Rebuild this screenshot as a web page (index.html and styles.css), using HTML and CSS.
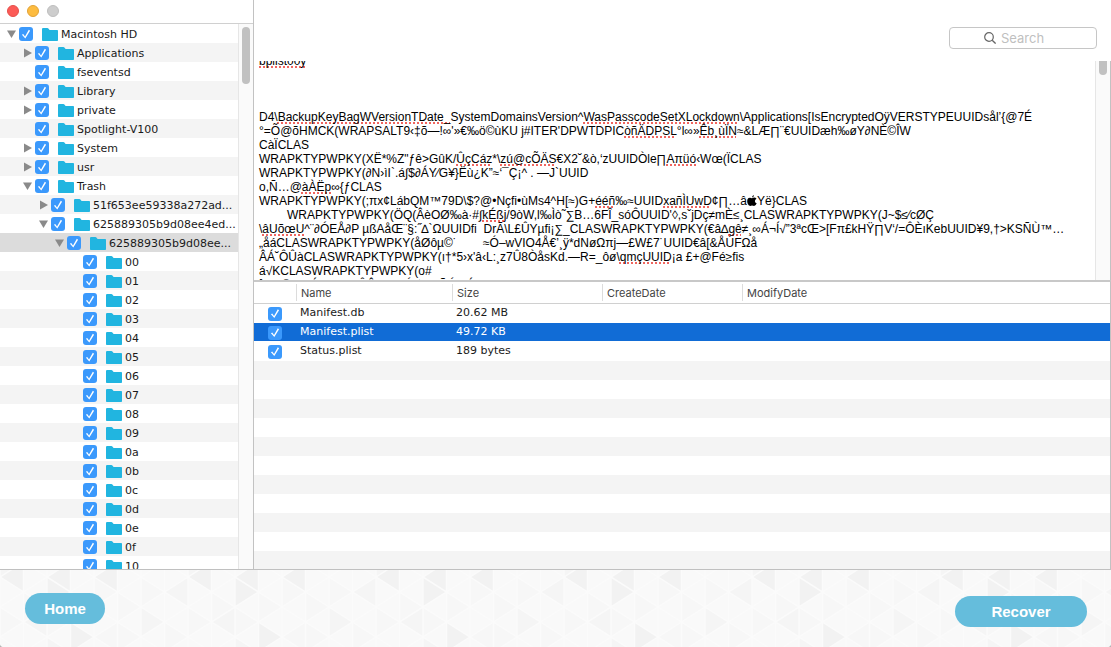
FILE: index.html
```html
<!DOCTYPE html>
<html lang="en">
<head>
<meta charset="utf-8">
<title>Recover files</title>
<link rel="stylesheet" href="styles.css">
</head>
<body>
<svg class="defs" aria-hidden="true">
  <symbol id="folder" viewBox="0 0 16 13"><path d="M0 1.2Q0 0 1 0H5.4Q6 0 6.4.5L7.600 2H15.200Q16 2 16 2.800V12.200Q16 13 15.200 13H.8Q0 13 0 12.200Z" fill="#21b5e0"/></symbol>
  <symbol id="down" viewBox="0 0 10 10"><path d="M0 1.500H9L4.500 9Z" fill="#8a8a8a"/></symbol>
  <symbol id="right" viewBox="0 0 10 10"><path d="M1 .5V9.500L9 5Z" fill="#8a8a8a"/></symbol>
</svg>
<div class="window">
  <main class="panes">
    <aside class="sidebar">
      <header class="titlebar">
        <button class="light close" aria-label="Close"></button>
        <button class="light minimize" aria-label="Minimize"></button>
        <button class="light zoom" aria-label="Zoom"></button>
      </header>
      <div class="tree-area">
        <ul class="tree">
          <li class="d0"><button class="arrow" aria-label="Collapse"><svg><use href="#down"/></svg></button><label><input type="checkbox" checked><svg class="folder"><use href="#folder"/></svg>Macintosh HD</label></li>
          <li class="d1"><button class="arrow" aria-label="Expand"><svg><use href="#right"/></svg></button><label><input type="checkbox" checked><svg class="folder"><use href="#folder"/></svg>Applications</label></li>
          <li class="d1 leaf"><label><input type="checkbox" checked><svg class="folder"><use href="#folder"/></svg>fseventsd</label></li>
          <li class="d1"><button class="arrow" aria-label="Expand"><svg><use href="#right"/></svg></button><label><input type="checkbox" checked><svg class="folder"><use href="#folder"/></svg>Library</label></li>
          <li class="d1"><button class="arrow" aria-label="Expand"><svg><use href="#right"/></svg></button><label><input type="checkbox" checked><svg class="folder"><use href="#folder"/></svg>private</label></li>
          <li class="d1 leaf"><label><input type="checkbox" checked><svg class="folder"><use href="#folder"/></svg>Spotlight-V100</label></li>
          <li class="d1"><button class="arrow" aria-label="Expand"><svg><use href="#right"/></svg></button><label><input type="checkbox" checked><svg class="folder"><use href="#folder"/></svg>System</label></li>
          <li class="d1"><button class="arrow" aria-label="Expand"><svg><use href="#right"/></svg></button><label><input type="checkbox" checked><svg class="folder"><use href="#folder"/></svg>usr</label></li>
          <li class="d1"><button class="arrow" aria-label="Collapse"><svg><use href="#down"/></svg></button><label><input type="checkbox" checked><svg class="folder"><use href="#folder"/></svg>Trash</label></li>
          <li class="d2"><button class="arrow" aria-label="Expand"><svg><use href="#right"/></svg></button><label><input type="checkbox" checked><svg class="folder"><use href="#folder"/></svg>51f653ee59338a272ad...</label></li>
          <li class="d2"><button class="arrow" aria-label="Collapse"><svg><use href="#down"/></svg></button><label><input type="checkbox" checked><svg class="folder"><use href="#folder"/></svg>625889305b9d08ee4ed...</label></li>
          <li class="d3 selected"><button class="arrow" aria-label="Collapse"><svg><use href="#down"/></svg></button><label><input type="checkbox" checked><svg class="folder"><use href="#folder"/></svg>625889305b9d08ee...</label></li>
          <li class="d4 leaf"><label><input type="checkbox" checked><svg class="folder"><use href="#folder"/></svg>00</label></li>
          <li class="d4 leaf"><label><input type="checkbox" checked><svg class="folder"><use href="#folder"/></svg>01</label></li>
          <li class="d4 leaf"><label><input type="checkbox" checked><svg class="folder"><use href="#folder"/></svg>02</label></li>
          <li class="d4 leaf"><label><input type="checkbox" checked><svg class="folder"><use href="#folder"/></svg>03</label></li>
          <li class="d4 leaf"><label><input type="checkbox" checked><svg class="folder"><use href="#folder"/></svg>04</label></li>
          <li class="d4 leaf"><label><input type="checkbox" checked><svg class="folder"><use href="#folder"/></svg>05</label></li>
          <li class="d4 leaf"><label><input type="checkbox" checked><svg class="folder"><use href="#folder"/></svg>06</label></li>
          <li class="d4 leaf"><label><input type="checkbox" checked><svg class="folder"><use href="#folder"/></svg>07</label></li>
          <li class="d4 leaf"><label><input type="checkbox" checked><svg class="folder"><use href="#folder"/></svg>08</label></li>
          <li class="d4 leaf"><label><input type="checkbox" checked><svg class="folder"><use href="#folder"/></svg>09</label></li>
          <li class="d4 leaf"><label><input type="checkbox" checked><svg class="folder"><use href="#folder"/></svg>0a</label></li>
          <li class="d4 leaf"><label><input type="checkbox" checked><svg class="folder"><use href="#folder"/></svg>0b</label></li>
          <li class="d4 leaf"><label><input type="checkbox" checked><svg class="folder"><use href="#folder"/></svg>0c</label></li>
          <li class="d4 leaf"><label><input type="checkbox" checked><svg class="folder"><use href="#folder"/></svg>0d</label></li>
          <li class="d4 leaf"><label><input type="checkbox" checked><svg class="folder"><use href="#folder"/></svg>0e</label></li>
          <li class="d4 leaf"><label><input type="checkbox" checked><svg class="folder"><use href="#folder"/></svg>0f</label></li>
          <li class="d4 leaf"><label><input type="checkbox" checked><svg class="folder"><use href="#folder"/></svg>10</label></li>
        </ul>
        <div class="track"><div class="thumb tree-thumb"></div></div>
      </div>
    </aside>
    <section class="content">
      <div class="toolbar">
        <label class="search">
          <svg viewBox="0 0 12 12"><circle cx="5" cy="5" r="4.300" fill="none" stroke="#666" stroke-width="1.200"/><path d="M8.200 8.200L11.600 11.600" stroke="#666" stroke-width="1.300"/></svg>
          <input type="search" placeholder="Search" aria-label="Search">
        </label>
      </div>
      <div class="preview">
        <div class="document"><p><u>bplist00ÿ</u></p>
<p></p><p></p><p></p>
<p>D4\<u>BackupKeyBagWVersionTDate_</u>SystemDomainsVersion^<u>WasPasscodeSetXLockdown</u>\Applications[IsEncryptedOÿVERSTYPEUUIDsål’{@7É</p>
<p>°=Õ@õHMCK(WRAPSALT9‹‡õ—!∞'»€‰ö©ùKU j#ITER'DPWTDPIC<u>òñÄDPSL</u>°l∞»<u>Êb¸ùÏN</u>≈&amp;LÆ∏¨€UUIDæh‰øY∂NÈ©ÎW</p>
<p>CàÏCLAS</p>
<p>WRAPKTYPWPKY(XË*%Z"ƒê&gt;GûK/<u>ÛçCáz</u>*\<u>zú@cÕÄS</u>€X2˘&amp;ò,‘zUUIDÒle∏<u>Aπüó</u>‹Wœ(ÏCLAS</p>
<p>WRAPKTYPWPKY(∂N›ìI`.á∫$∂ÁY⁄G¥}Ëù¿K”≈‘¯Ç¡^ . —J`UUID</p>
<p>o,Ñ…@<u>àÀËp</u>∞{ƒCLAS</p>
<p>WRAPKTYPWPKY(;πx¢LábQM™79D\$?@•Nçﬁ•ùMs4^H[≈)G+<u>ééñ</u>‰≈UUID<u>xañÌUwD</u>¢∏…â<svg class="apple" viewBox="0 0 10 11"><path d="M7 0Q5 .5 5 2.500 7 2.200 7 0ZM5 3.200Q6 2.600 7.200 2.600 8.700 2.700 9.500 3.800 7.600 5 8 6.700 8.300 7.900 9.700 8.200 8.700 10.900 7.100 11 6 10.500 5 10.500 4 10.500 3.200 11 1.500 10.800.5 8.200-.5 4.500 1.500 3.100 3 2.200 5 3.200Z"/></svg>Yë}CLAS</p>
<p>	WRAPKTYPWPKY(ÖQ(ÂèOØ‰à·#∫<u>kÉßj</u>/9òW,l‰Ìò˜∑B…6FÎ_sóÔUUID'◊,sˇjDç≠mÈ≤¸CLASWRAPKTYPWPKY(J~$≤⁄cØÇ</p>
<p>\<u>âUõœU</u>^¨∂ÓEÅ∂P µßAåŒ¨§:˝∆`ΩUUIDﬁ  DrÃ\L£ÛYµﬁ¡∑_CLASWRAPKTYPWPKY(€â∆<u>gê</u>≠¸∞Á¬Í√”3ªcŒ&gt;[Fπ£kHŸ∏V‘/=ÔÈıKebUUID¥9,†&gt;KSÑÙ™…</p>
<p>„åáCLASWRAPKTYPWPKY(åØôµ©˙	≈Ó–wVIO4Å€’¸ÿ*dNøΩπj—£W£7˙UUID€â[&amp;ÅÚFΩå</p>
<p>ÂÁ˘ÔÛàCLASWRAPKTYPWPKY(ı†*5›x'â‹L:¸z7Û8ÒåsKd.—R=_ôø\<u>qmçUUID</u>¡a £+@Fé≥ﬁs</p>
<p>á√KCLASWRAPKTYPWPKY(o#</p>
<p>ˆxpc©qnoÉwa(m)zÔÂasv·eÚ√wcrÑÓmÉ</p></div>
        <div class="track"><div class="thumb text-thumb"></div></div>
      </div>
      <div class="files">
        <table>
          <colgroup><col class="c-check"><col class="c-name"><col class="c-size"><col class="c-date"><col></colgroup>
          <thead><tr><th></th><th>Name</th><th>Size</th><th>CreateDate</th><th>ModifyDate</th></tr></thead>
          <tbody>
            <tr><td><input type="checkbox" id="f1" checked></td><td><label for="f1">Manifest.db</label></td><td>20.62 MB</td><td></td><td></td></tr>
            <tr class="selected"><td><input type="checkbox" id="f2" checked></td><td><label for="f2">Manifest.plist</label></td><td>49.72 KB</td><td></td><td></td></tr>
            <tr><td><input type="checkbox" id="f3" checked></td><td><label for="f3">Status.plist</label></td><td>189 bytes</td><td></td><td></td></tr>
          </tbody>
        </table>
        <div class="stripes"></div>
      </div>
    </section>
  </main>
  <footer class="footer">
    <svg class="pattern" aria-hidden="true">
      <defs>
        <pattern id="tri" width="188" height="90" patternUnits="userSpaceOnUse" patternTransform="translate(47 0)">
          <rect width="188" height="90" fill="#f9f9f9"/>
          <path d="M0 37V67L23.500 52ZM47 7V37L70.500 22ZM94 7V37L117.500 22ZM70.500 22V52L94 37ZM23.500 22V52L47 37ZM141 37V67L164.500 52ZM164.500 22V52L188 37ZM47 67L70.500 52V82ZM117.500 52V82L141 67ZM70.500 52V82L94 67Z" fill="#f7f7f7"/>
          <path d="M117.500 22L141 7V37ZM0 67V97L23.500 82ZM94 37V67L117.500 52ZM164.500 52L188 37V67ZM141 -8V7L164.500 7Z" fill="#f5f5f5"/>
          <path d="M0 7V37L23.500 22ZM0 7L23.500 -8V22ZM47 7L70.500 -8V22ZM141 7L164.500 -8V22ZM23.500 52V82L47 67Z" fill="#f2f2f2"/>
          <path d="M0 0V90M23.500 0V90M47 0V90M70.500 0V90M94 0V90M117.500 0V90M141 0V90M164.500 0V90M188 0V90M0 7L188 127.000M0 37L141 127M0 67L94 127M0 -23L188 97M0 -53L188 67M0 -83L188 37M0 -113L188 7M0 7L23.500 -8M0 37L70.500 -8M0 67L117.500 -8M0 97L164.500 -8M0 127L188 7M0 157L188 37M0 187L188 67M0 217L188 97" fill="none" stroke="#fbfbfb" stroke-width="1.500"/>
        </pattern>
      </defs>
      <rect width="100%" height="100%" fill="url(#tri)"/>
    </svg>
    <button class="action home">Home</button>
    <button class="action recover">Recover</button>
  </footer>
</div>
</body>
</html>
```
FILE: styles.css
```css
* { box-sizing: border-box; }

body {
  margin: 0;
  background: #b4b4b4;
  color: #1a1a1a;
  font: 11px/19px "DejaVu Sans", sans-serif;
}

button { padding: 0; border: 0; background: none; }

.defs { position: absolute; width: 0; height: 0; }

.window {
  display: flex;
  flex-direction: column;
  height: 100vh;
}

.panes {
  display: flex;
  flex: 1;
  min-height: 0;
  background: #fff;
}

.sidebar {
  display: flex;
  flex-direction: column;
  flex: none;
  width: 254px;
  border-right: 1px solid #c2c2c2;
}

.titlebar {
  display: flex;
  gap: 8px;
  height: 24px;
  padding: 5px 7px;
  border-bottom: 1px solid #d0d0d0;
}

.light { width: 12px; height: 12px; border-radius: 50%; }
.close { background: #fc5b57; border: 1px solid #e5504b; }
.minimize { background: #fdbc40; border: 1px solid #e2a336; }
.zoom { background: #cdcdcd; border: 1px solid #bebebe; }

.tree-area { display: flex; flex: 1; min-height: 0; }

.tree {
  flex: 1;
  min-width: 0;
  margin: 0;
  padding: 0;
  overflow: hidden;
  list-style: none;
}

.tree li {
  display: flex;
  align-items: center;
  gap: 2px;
  height: 19px;
  padding-left: 7px;
  white-space: nowrap;
}

.tree li:nth-child(even) { background: #f4f4f4; }
.tree li.selected { background: #dcdcdc; }
.tree .d1 { padding-left: 23px; }
.tree .d2 { padding-left: 39px; }
.tree .d3 { padding-left: 55px; }
.tree .d4 { padding-left: 71px; }
.leaf::before { content: ""; width: 10px; }

.arrow, .arrow svg { display: block; width: 10px; height: 10px; }
.tree label { display: flex; align-items: center; padding-top: 3px; line-height: 18px; }

.folder { width: 16px; height: 13px; margin: 0 3px 1px 9px; }

input[type="checkbox"] {
  appearance: none;
  display: block;
  flex: none;
  width: 14px;
  height: 14px;
  margin: 0;
  border-radius: 3px;
  background: #3b99fc;
}

input[type="checkbox"]:checked::before {
  content: "";
  display: block;
  width: 14px;
  height: 14px;
  background: #fff;
  clip-path: polygon(21% 55%, 30% 50%, 43% 67%, 70% 20%, 79% 26%, 45% 83%);
}

.tree input[type="checkbox"] { margin-bottom: 2px; }

.track {
  flex: none;
  width: 15px;
  padding: 3px;
  border-left: 1px solid #e6e6e6;
  background: #fafafa;
}

.thumb { width: 8px; border-radius: 4px; background: #c1c1c1; }
.tree-thumb { height: 57px; }

.content {
  display: flex;
  flex: 1;
  flex-direction: column;
  min-width: 0;
}

.toolbar {
  display: flex;
  flex: none;
  justify-content: flex-end;
  height: 61px;
  padding: 27px 14px 12px;
}

.search {
  display: flex;
  align-items: center;
  gap: 5px;
  width: 148px;
  padding-left: 34px;
  border: 1px solid #c6c6c6;
  border-radius: 4px;
}

.search svg { flex: none; width: 12px; height: 12px; }

.search input {
  width: 100%;
  min-width: 0;
  padding: 0;
  border: 0;
  outline: 0;
  background: none;
  font: 13px/18px Inter, sans-serif;
}

.search input::placeholder { color: #bfbfbf; }

.preview {
  display: flex;
  flex: 219 1 0;
  min-height: 0;
  overflow: hidden;
  border-right: 1px solid #c2c2c2;
}

.document {
  flex: 1;
  min-width: 0;
  margin-top: -7px;
  padding-left: 5px;
  color: #000;
  font: 12px/14px "Liberation Sans", Arial, sans-serif;
  white-space: nowrap;
}

.document p { height: 14px; margin: 0; white-space: pre; tab-size: 28px; }

.document u {
  text-decoration: underline dotted #f0655f 2px;
  text-decoration-skip-ink: none;
  text-underline-offset: 1px;
}

.apple { width: 10px; height: 11px; vertical-align: -1px; }

.preview .track { padding-top: 0; }
.text-thumb { height: 14px; border-radius: 0 0 4px 4px; }

.files {
  display: flex;
  flex: 287 1 0;
  flex-direction: column;
  min-height: 0;
  overflow: hidden;
  border-top: 2px solid #c8c8c8;
  border-right: 1px solid #c2c2c2;
}

table {
  width: 100%;
  border-spacing: 0;
  table-layout: fixed;
}

.c-check { width: 42px; }
.c-name { width: 156px; }
.c-size { width: 150px; }
.c-date { width: 140px; }

th {
  height: 22px;
  padding: 0 0 0 4px;
  border-bottom: 1px solid #d0d0d0;
  color: #444;
  font: 11px/20px Inter, sans-serif;
  text-align: left;
}

th + th {
  background: linear-gradient(#dcdcdc, #dcdcdc) no-repeat 0 2px / 1px 17px;
  padding-left: 5px;
}

td { height: 19px; padding: 0 0 2px 4px; line-height: 17px; }
td:first-child { padding: 1px 0 1px 14px; }
.files .selected td { border-bottom: 1px solid #fff; padding-bottom: 1px; background: #116cd6; color: #fff; }
.files .selected td:first-child { padding-bottom: 0; }

.stripes {
  flex: 1;
  background: repeating-linear-gradient(#f4f4f4 0 19px, #fff 19px 38px);
}

.footer {
  position: relative;
  display: flex;
  flex: none;
  align-items: flex-start;
  justify-content: space-between;
  height: 78px;
  padding: 23px 24px 0 25px;
  overflow: hidden;
  border-top: 1px solid #c0c0c0;
  border-radius: 0 0 4px 4px;
  background: #f9f9f9;
}

.pattern { position: absolute; inset: 0; width: 100%; height: 100%; }

.action {
  position: relative;
  height: 31px;
  border-radius: 16px;
  background: #65bddc;
  color: #fff;
  font: bold 15px/30px "Liberation Sans", Arial, sans-serif;
}

.home { width: 80px; }
.recover { width: 132px; margin-top: 3px; }
```
